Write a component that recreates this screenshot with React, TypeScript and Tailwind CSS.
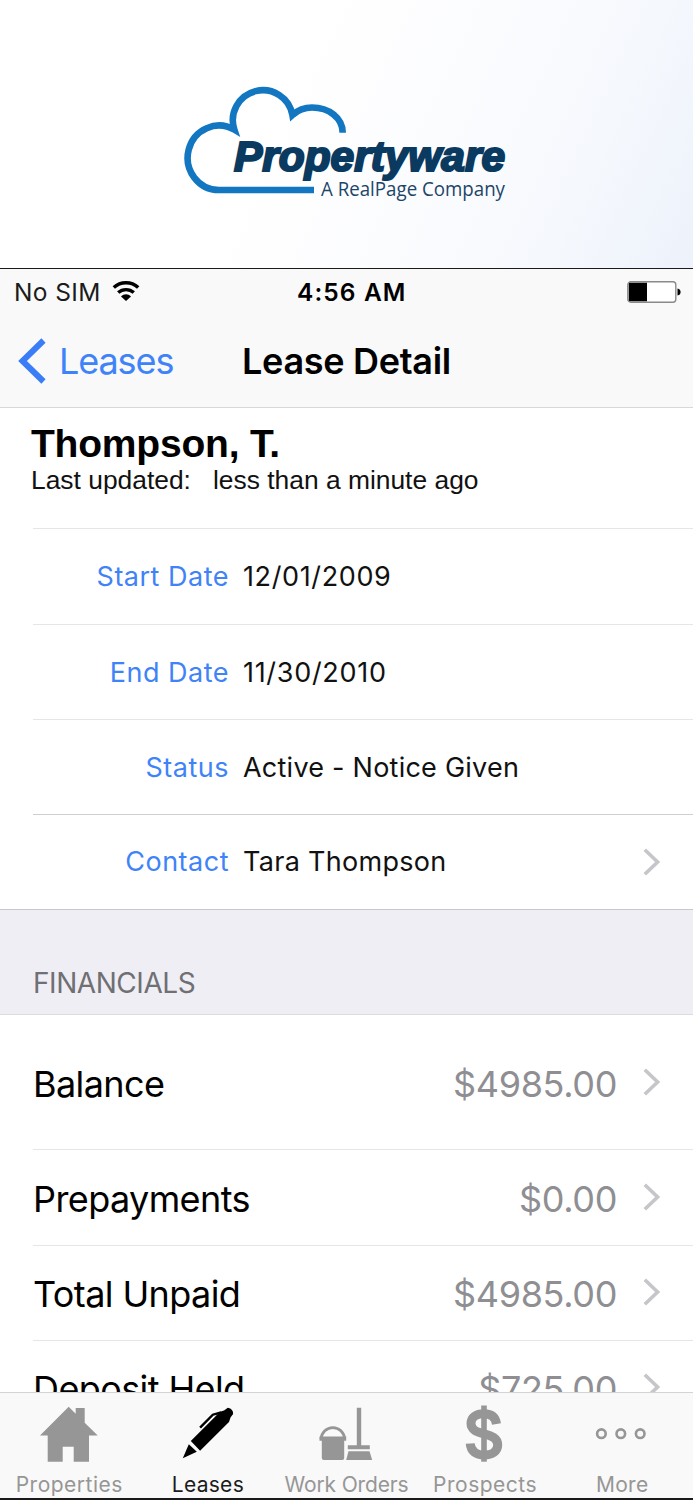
import type { ReactNode } from "react";

const details = [
  { label: "Start Date", value: "12/01/2009", line: "h-24 border-[#e6e6e8]", tracking: "tracking-[0.62px]" },
  { label: "End Date", value: "11/30/2010", line: "h-[95px] border-[#e6e6e8]", tracking: "tracking-[0.7px]" },
  { label: "Status", value: "Active - Notice Given", line: "h-[95px] border-[#cfcfd2]", tracking: "tracking-[0.24px]" },
  { label: "Contact", value: "Tara Thompson", line: "h-[94px] border-transparent", tracking: "tracking-[0.3px]", link: true },
];

const financials = [
  { label: "Balance", amount: "$4985.00", row: "h-[135px]" },
  { label: "Prepayments", amount: "$0.00", row: "h-24 pb-px" },
  { label: "Total Unpaid", amount: "$4985.00", row: "h-[95px] pb-[2px]" },
  { label: "Deposit Held", amount: "$725.00", row: "h-[95px] pb-[2px]" },
];

function Logo() {
  return (
    <svg width="340" height="130" viewBox="175 80 340 130" className="mt-20 ml-[175px]">
      <path
        d="M314 190H219A31.4 32.2 0 1 1 234.4 129.7A30 30 0 1 1 292.4 115C298 110 305 107.5 312 107.5C329 107.5 342.7 118 342.7 132.7"
        fill="none"
        stroke="#1277c0"
        strokeWidth="6.6"
        strokeMiterlimit="10"
      />
      <text
        x="234"
        y="170.5"
        textLength="271"
        lengthAdjust="spacingAndGlyphs"
        className="fill-[#0b3a60] stroke-[#0b3a60] stroke-[2.2px] font-['Liberation_Sans',Arial,sans-serif] text-[42px] font-bold italic"
      >
        Propertyware
      </text>
      <text
        x="321"
        y="195.5"
        textLength="184"
        lengthAdjust="spacingAndGlyphs"
        className="fill-[#1c4567] font-['Open_Sans',sans-serif] text-[20.5px] font-medium"
      >
        A RealPage Company
      </text>
    </svg>
  );
}

function StatusBar() {
  return (
    <div className="flex h-[46px] items-center text-[24.5px] leading-none">
      <div className="flex w-[297px] items-center gap-3 pl-[14px]">
        <span className="w-[87px] whitespace-nowrap tracking-[0.4px] text-[#1b1b1b]">No SIM</span>
        <svg width="28" height="20" viewBox="0 0 28 20" fill="none" stroke="#000" strokeWidth="3.4" className="-mt-0.5 -ml-px">
          <path d="M1.8 6.6C8.5 .2 19.5 .2 26.2 6.6" />
          <path d="M6.2 11.6C10.6 7.6 17.4 7.6 21.8 11.6" />
          <path d="M14 20L9 15.4C12 12.6 16 12.6 19 15.4Z" fill="#000" stroke="none" />
        </svg>
      </div>
      <span className="whitespace-nowrap font-semibold tracking-[1.1px]">4:56 AM</span>
      <svg width="54" height="22" viewBox="0 0 54 22" className="mr-[12px] ml-auto">
        <rect x=".8" y=".8" width="48" height="20.4" rx="3" fill="#fff" stroke="#8a8a8a" strokeWidth="1.4" />
        <path d="M3 1.8H20V20.2H3Q1.8 20.2 1.8 19V3Q1.8 1.8 3 1.8Z" />
        <path d="M50.5 7.5Q53.6 8 53.6 11T50.5 14.5Z" />
      </svg>
    </div>
  );
}

function NavBar() {
  return (
    <div className="flex h-[92px] items-center pb-px text-[36px] leading-none">
      <svg width="28" height="46" viewBox="0 0 28 46" className="ml-[18px]">
        <path d="M25.5 2.5L4.5 23L25.5 43.5" fill="none" stroke="#3a7df7" strokeWidth="6" />
      </svg>
      <span className="ml-[13px] w-[183px] tracking-[-1.1px] text-[#3f83f8]">Leases</span>
      <h1 className="whitespace-nowrap font-semibold tracking-[-0.3px]">Lease Detail</h1>
    </div>
  );
}

function Chevron() {
  return (
    <svg width="18" height="28" viewBox="0 0 18 28" className="mr-[32px] shrink-0">
      <path d="M1.8 1.8L14.6 14L1.8 26.2" fill="none" stroke="#c5c5ca" strokeWidth="3.6" />
    </svg>
  );
}

interface TabProps {
  label: string;
  active?: boolean;
  labelClass?: string;
  children: ReactNode;
}

function Tab({ label, active, labelClass = "tracking-[0.5px]", children }: TabProps) {
  return (
    <div className={`flex flex-1 flex-col items-center pt-[11px] ${active ? "text-[#1c1c1c]" : "text-[#969696]"}`}>
      <svg width="60" height="60" viewBox="0 0 60 60" fill="currentColor">
        {children}
      </svg>
      <span className={`mt-[10px] whitespace-nowrap text-[21px] leading-[22px] ${labelClass}`}>{label}</span>
    </div>
  );
}

export default function App() {
  return (
    <div className="flex h-[1500px] w-[693px] flex-col overflow-hidden bg-white font-['Inter','Liberation_Sans',sans-serif] text-black">
      <div className="h-[268px] shrink-0 bg-[linear-gradient(115deg,#ffffff_40%,#fafbfe_68%,#f5f8fd_82%,#edf2fb_100%)]">
        <Logo />
      </div>

      <header className="h-[140px] shrink-0 border-t border-b border-t-[#1a1a1a] border-b-[#d8d8da] bg-[#f9f9f9]">
        <StatusBar />
        <NavBar />
      </header>

      <main className="min-h-0 flex-1 overflow-hidden">
        <div className="h-[120px] pt-[15px] pl-[31px] font-['Liberation_Sans',Arial,sans-serif]">
          <h2 className="text-[39px] leading-[42px] font-bold tracking-[-0.2px]">Thompson, T.</h2>
          <p className="text-[26.4px] leading-[31px] whitespace-pre text-[#111]">Last updated:   less than a minute ago</p>
        </div>

        <section className="ml-[33px] border-t border-[#e6e6e8]">
          {details.map((row) => (
            <div key={row.label} className={`flex items-center border-b text-[27px] leading-none ${row.line}`}>
              <span className="w-[196px] text-right tracking-[0.5px] text-[#3f83f8]">{row.label}</span>
              <span className={`ml-[14px] flex-1 whitespace-nowrap text-[#111] ${row.tracking}`}>{row.value}</span>
              {row.link && <Chevron />}
            </div>
          ))}
        </section>

        <div className="flex h-[106px] items-end border-t border-b border-t-[#c8c7cc] border-b-[#dcdbe0] bg-[#efeef4] pb-[16px] pl-[33px]">
          <h3 className="text-[28px] leading-[30px] tracking-[-0.45px] text-[#6f6f74]">FINANCIALS</h3>
        </div>

        <section className="ml-[33px]">
          {financials.map((item) => (
            <div key={item.label} className={`flex items-center border-b border-[#e6e6e8] text-[36px] leading-none ${item.row}`}>
              <span className="pt-[3px] tracking-[-0.6px]">{item.label}</span>
              <span className="mr-[26px] ml-auto pt-[3px] tracking-[-0.35px] text-[#8e8e93]">{item.amount}</span>
              <Chevron />
            </div>
          ))}
        </section>
      </main>

      <nav className="flex h-[108px] shrink-0 border-t border-b-2 border-t-[#d4d4d6] border-b-[#1a1a1a] bg-[#f9f9f9]">
        <Tab label="Properties">
          <path d="M29.7 2.7L36.7 9.8V4H45.7V18.8L58.7 31.5H50V57.7H34.7V42.7H23.7V57.7H8.7V31.5H1Z" />
        </Tab>
        <Tab label="Leases" active labelClass="tracking-[0.3px]">
          <g fill="#000">
            <path d="M12.8 37L42.1 7.7L46 6.5L49.8 3.8Q55.5 5 55.1 10L52.5 13.5L51 18L22.1 46.7Z" />
            <path d="M10.8 40.3L18.8 47.7L4.8 54.3Z" />
            <path d="M22.1 23.7L34.8 10.7L43 8.5" fill="none" stroke="#000" strokeWidth="2.4" />
          </g>
        </Tab>
        <Tab label="Work Orders" labelClass="tracking-[-0.15px]">
          <path d="M5 35A11.9 12.6 0 0 1 28.7 35" fill="none" stroke="currentColor" strokeWidth="2.8" />
          <path d="M3.5 32.5H30.2V36.7H28.2V54Q28.2 56 26.2 56H7.8Q5.8 56 5.8 54V36.7H3.5Z" />
          <path d="M40.8 3.7H45.2V41.3H53.8V45.3H31.8V41.3H40.8Z" />
          <path d="M32.5 47.3H53.5L56.2 56H30.2Z" />
        </Tab>
        <Tab label="Prospects">
          <path
            d="M41.5 20C40.5 13 36 9.8 29 9.8C21 9.8 16 13.5 16 19.3C16 26 22 28 29 29.8C36.5 31.7 42.7 34 42.7 41C42.7 47.3 37 51 29.3 51C21 51 15.8 47.5 15.2 39.5"
            fill="none"
            stroke="currentColor"
            strokeWidth="9"
          />
          <path d="M26.2 1.5H31.8V57.7H26.2Z" />
        </Tab>
        <Tab label="More" labelClass="-ml-[3px] tracking-[0.3px]">
          <g fill="none" stroke="currentColor" strokeWidth="2.6">
            <circle cx="7.4" cy="29.7" r="4.3" />
            <circle cx="26.8" cy="29.7" r="4.3" />
            <circle cx="46.2" cy="29.7" r="4.3" />
          </g>
        </Tab>
      </nav>
    </div>
  );
}
